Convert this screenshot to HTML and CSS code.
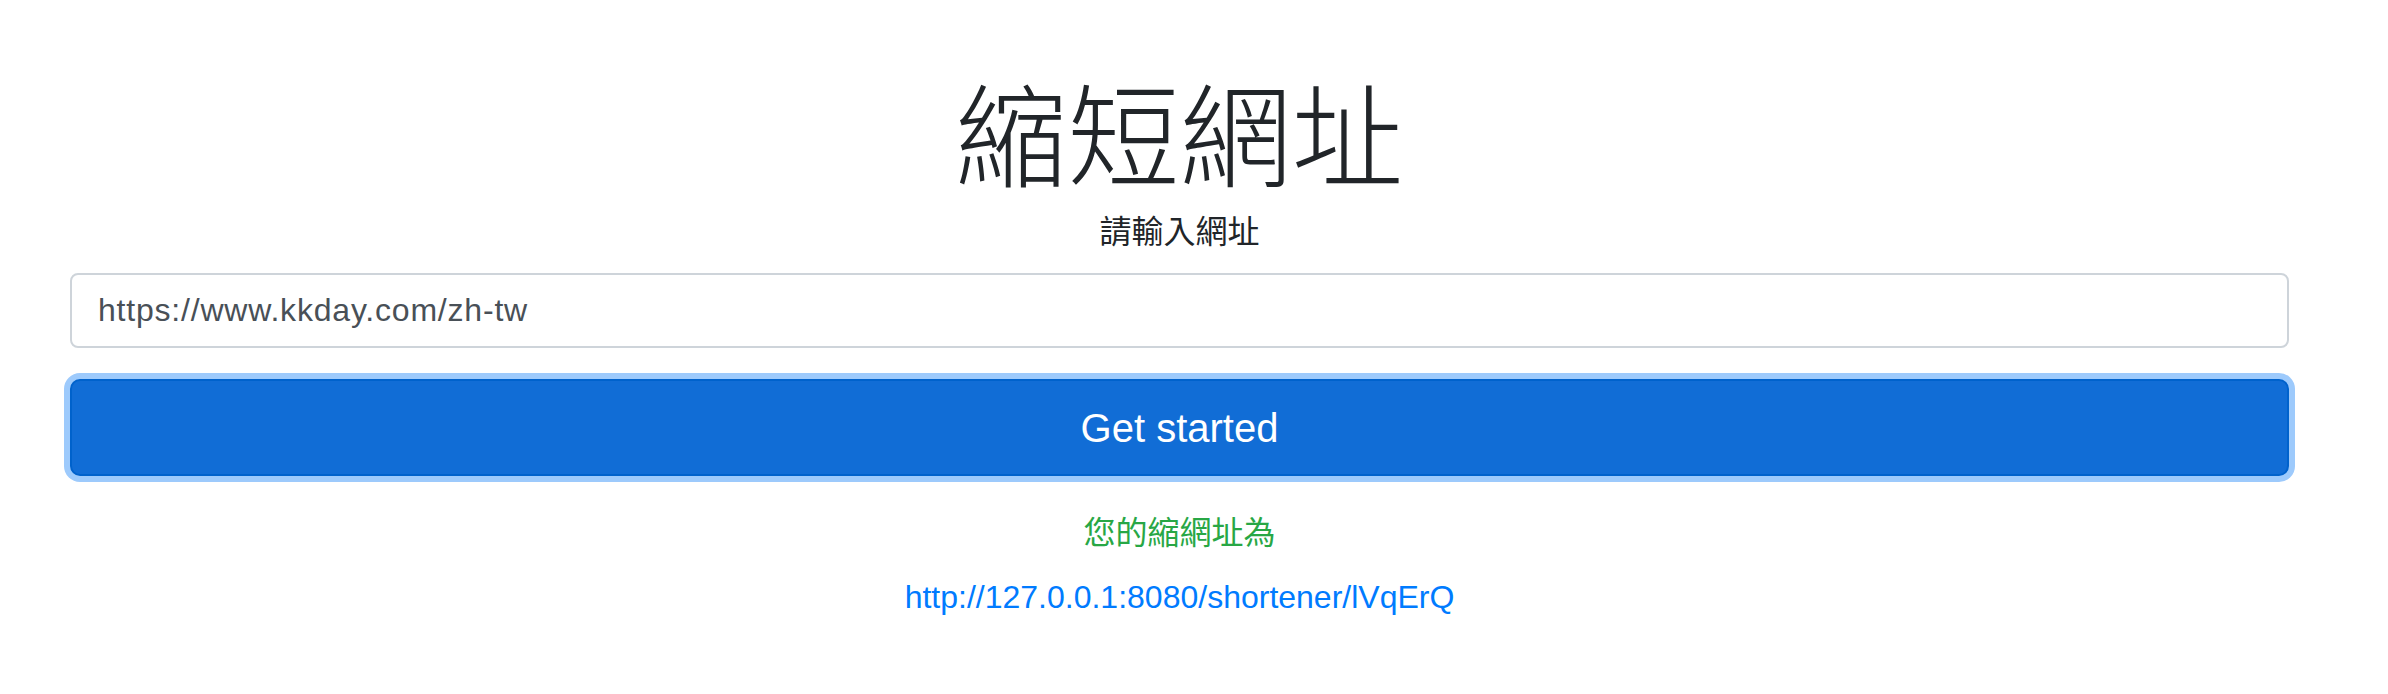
FILE: index.html
```html
<!DOCTYPE html>
<html lang="zh-Hant">
<head>
<meta charset="utf-8">
<title>縮短網址</title>
<link rel="stylesheet" href="styles.css">
</head>
<body>
<main class="page">
  <h1 class="title">縮短網址</h1>
  <form class="form">
    <label class="label" for="url">請輸入網址</label>
    <input class="input" id="url" type="text" value="https://www.kkday.com/zh-tw">
    <button class="btn" type="button">Get started</button>
  </form>
  <p class="result-label">您的縮網址為</p>
  <a class="result-link" href="#">http://127.0.0.1:8080/shortener/lVqErQ</a>
</main>
</body>
</html>
```

FILE: styles.css
```css
html, body {
  margin: 0;
  padding: 0;
  background: #ffffff;
}

body {
  font-family: "Liberation Sans", "Noto Sans CJK TC", sans-serif;
  color: #212529;
}

.page {
  padding: 74px 99px 40px 70px;
  display: flex;
  flex-direction: column;
  text-align: center;
}

.title {
  margin: 0;
  font-size: 112px;
  font-weight: 300;
  line-height: 1.2;
  color: #212529;
}

.form {
  display: flex;
  flex-direction: column;
}

.label {
  display: block;
  font-size: 32px;
  line-height: 48px;
  margin-bottom: 17px;
  color: #212529;
}

.input {
  box-sizing: border-box;
  width: 100%;
  height: 75px;
  padding: 12px 24px 12px 26px;
  border: 2px solid #ced4da;
  border-radius: 8px;
  font-family: "Liberation Sans", "Noto Sans CJK TC", sans-serif;
  font-size: 32px;
  letter-spacing: 0.8px;
  color: #495057;
  background: #ffffff;
  outline: none;
  margin: 0 0 31px;
}

.btn {
  box-sizing: border-box;
  width: 100%;
  height: 97px;
  padding: 16px 32px;
  border: 2px solid #0062cc;
  border-radius: 10px;
  background: #116dd6;
  color: #ffffff;
  font-family: "Liberation Sans", "Noto Sans CJK TC", sans-serif;
  font-size: 40px;
  line-height: 60px;
  box-shadow: 0 0 0 6px #9dcafc;
  cursor: pointer;
}

.result-label {
  margin: 33px 0 0;
  font-size: 32px;
  line-height: 48px;
  color: #28a745;
}

.result-link {
  display: block;
  margin-top: 16px;
  font-size: 32px;
  line-height: 48px;
  color: #007bff;
  text-decoration: none;
}
```
